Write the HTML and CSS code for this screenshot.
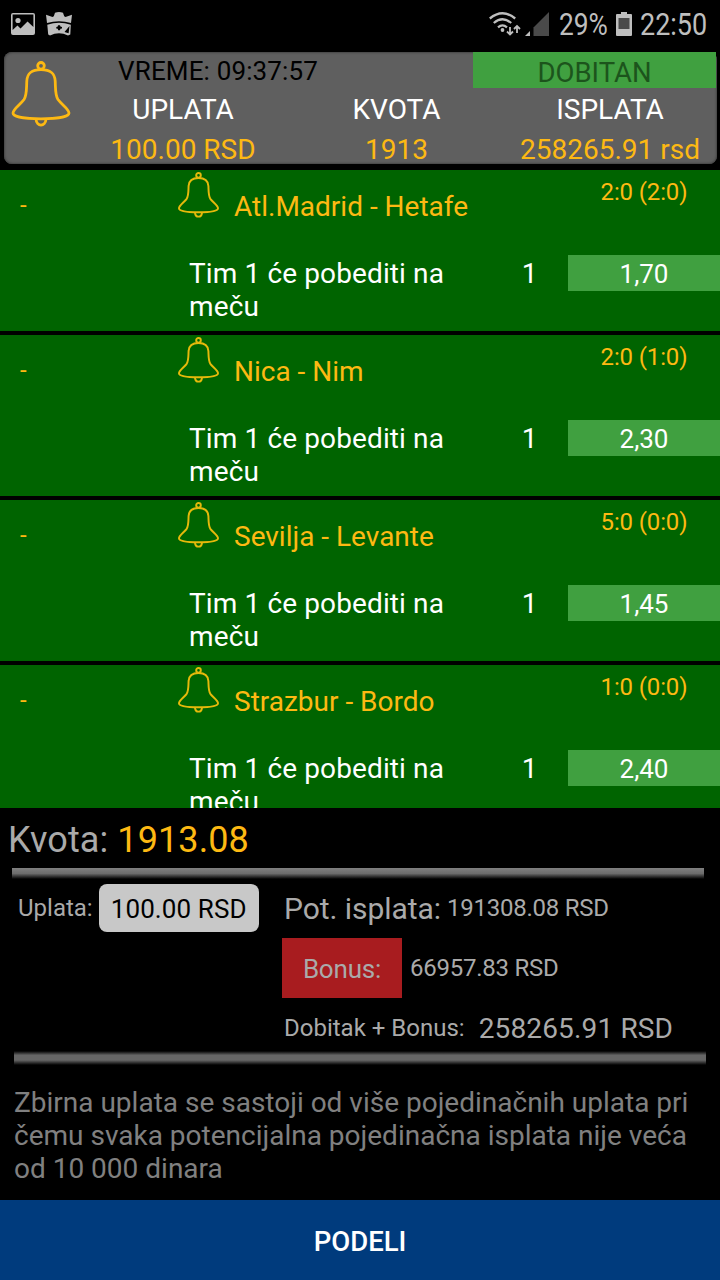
FILE: index.html
```html
<!DOCTYPE html>
<html lang="sr-Latn">
<head>
    <meta charset="UTF-8">
    <meta name="viewport" content="width=device-width, initial-scale=1.0">
    <title>Tiket</title>
    <link rel="stylesheet" href="styles.css">
</head>
<body>
    <svg class="defs">
        <symbol id="bell" viewBox="0 0 60 66">
            <circle cx="30" cy="4.8" r="3.3"/>
            <path d="M30 8.6C20 8.6 16.3 12.5 15.8 20C15.4 27 16 34 13 38.5C9.5 43.5 2 48 2 52C2 56 14 57.8 30 57.8C46 57.8 58 56 58 52C58 48 50.5 43.5 47 38.5C44 34 44.6 27 44.2 20C43.7 12.5 40 8.6 30 8.6Z"/>
            <path d="M25 58.2C25.5 66 34.5 66 35 58.2"/>
        </symbol>
    </svg>

    <div class="status-bar">
        <svg class="icon-photo" viewBox="0 0 24 22">
            <path fill-rule="evenodd" d="M2 0H22Q24 0 24 2V20Q24 22 22 22H2Q0 22 0 20V2Q0 0 2 0ZM1.6 1.6V17L6.5 12.5L9.5 15.5L16.5 8.5L22.4 14V1.6Z"/>
            <circle cx="7" cy="7.5" r="2.6"/>
        </svg>
        <svg class="icon-pirate" viewBox="0 0 26 24">
            <path d="M0 2.7L6.5 5L7.8 4.2L9 .8Q13 -.6 17 .8L18.2 4.2L19.5 5L26 2.7L25 11Q13 7.5 1 11Z"/>
            <path fill-rule="evenodd" d="M1.3 12.8Q13 8.8 24.8 12.8L24.3 22.5L22 23.5Q13 19 4 23.5L2.2 22.5ZM12 13.2L11.8 14.6L10.3 15L10.3 16.4L11.8 16.8L12.2 18.2H14L14.4 16.8L16 16.4V15L14.4 14.6L14 13.2ZM23.5 14L18.5 20L22.6 21.2Z"/>
        </svg>
        <div class="status-right">
            <svg class="icon-wifi" viewBox="0 0 32 24">
                <g fill="none" stroke="#bebebe" stroke-width="2.3">
                    <path d="M.8 6.5Q13.5 -4 26.2 6.5"/>
                    <path d="M4.8 11Q13.5 3.5 22.2 11"/>
                    <path d="M9 15.3Q13.5 11.5 18 15.3"/>
                    <path stroke-width="1.8" d="M21 15V22.5M18 19.5L21 22.5L24 19.5M28 21V14M25 17L28 14L31 17"/>
                </g>
                <circle cx="13.5" cy="18" r="1.9"/>
            </svg>
            <svg class="icon-signal" viewBox="0 0 25 24">
                <path d="M0 24L5 19V24Z"/>
                <path fill="#4a4a4a" d="M8.5 24V15.5L24 0V24Z"/>
            </svg>
            <span class="battery-text">29%</span>
            <svg class="icon-battery" viewBox="0 0 16 24">
                <path d="M5 0H11V2H15Q16 2 16 3V23Q16 24 15 24H1Q0 24 0 23V3Q0 2 1 2H5Z"/>
                <path fill="#4a4a4a" d="M2.5 6H13.5V17H2.5Z"/>
            </svg>
            <span class="clock">22:50</span>
        </div>
    </div>

    <div class="ticket">
        <svg class="bell bell-big"><use href="#bell"/></svg>
        <div class="ticket-info">
            <div class="ticket-top">
                <span class="ticket-time">VREME: 09:37:57</span>
                <span class="ticket-status">DOBITAN</span>
            </div>
            <div class="ticket-grid">
                <span>UPLATA</span>
                <span>KVOTA</span>
                <span>ISPLATA</span>
                <span class="amber">100.00 RSD</span>
                <span class="amber">1913</span>
                <span class="amber">258265.91 rsd</span>
            </div>
        </div>
    </div>

    <div class="matches">
        <div class="match">
            <div class="match-head">
                <span class="match-date">-</span>
                <svg class="bell"><use href="#bell"/></svg>
                <span class="match-name">Atl.Madrid - Hetafe</span>
                <span class="score">2:0 (2:0)</span>
            </div>
            <div class="match-bet">
                <span class="bet-text">Tim 1 će pobediti na meču</span>
                <span class="bet-tip">1</span>
                <span class="odd">1,70</span>
            </div>
        </div>
        <div class="match">
            <div class="match-head">
                <span class="match-date">-</span>
                <svg class="bell"><use href="#bell"/></svg>
                <span class="match-name">Nica - Nim</span>
                <span class="score">2:0 (1:0)</span>
            </div>
            <div class="match-bet">
                <span class="bet-text">Tim 1 će pobediti na meču</span>
                <span class="bet-tip">1</span>
                <span class="odd">2,30</span>
            </div>
        </div>
        <div class="match">
            <div class="match-head">
                <span class="match-date">-</span>
                <svg class="bell"><use href="#bell"/></svg>
                <span class="match-name">Sevilja - Levante</span>
                <span class="score">5:0 (0:0)</span>
            </div>
            <div class="match-bet">
                <span class="bet-text">Tim 1 će pobediti na meču</span>
                <span class="bet-tip">1</span>
                <span class="odd">1,45</span>
            </div>
        </div>
        <div class="match">
            <div class="match-head">
                <span class="match-date">-</span>
                <svg class="bell"><use href="#bell"/></svg>
                <span class="match-name">Strazbur - Bordo</span>
                <span class="score">1:0 (0:0)</span>
            </div>
            <div class="match-bet">
                <span class="bet-text">Tim 1 će pobediti na meču</span>
                <span class="bet-tip">1</span>
                <span class="odd">2,40</span>
            </div>
        </div>
    </div>

    <div class="total-odds">Kvota: <span class="amber">1913.08</span></div>
    <div class="line line-top"></div>

    <div class="summary">
        <div class="stake">
            <span>Uplata:</span>
            <span class="stake-value">100.00 RSD</span>
        </div>
        <div class="payouts">
            <div class="payout-row">
                <span class="payout-label">Pot. isplata:</span>
                <span class="payout-value">191308.08 RSD</span>
            </div>
            <div class="payout-row">
                <span class="bonus">Bonus:</span>
                <span class="payout-value">66957.83 RSD</span>
            </div>
            <div class="payout-row">
                <span class="sum-label">Dobitak + Bonus:</span>
                <span class="sum-value">258265.91 RSD</span>
            </div>
        </div>
    </div>
    <div class="line line-bottom"></div>

    <p class="note">Zbirna uplata se sastoji od više pojedinačnih uplata pri čemu svaka potencijalna pojedinačna isplata nije veća od 10 000 dinara</p>

    <button class="share">PODELI</button>
</body>
</html>
```
FILE: styles.css
```css
* {
    box-sizing: border-box;
}
body {
    margin: 0;
    width: 720px;
    height: 1280px;
    overflow: hidden;
    display: flex;
    flex-direction: column;
    background-color: #000;
    color: #fff;
    font-family: Roboto, sans-serif;
    font-size: 28px;
    line-height: 33px;
}
svg {
    display: block;
    flex: none;
}
.defs {
    display: none;
}
.amber {
    color: #fdb913;
}
.bell {
    width: 44px;
    height: 46px;
    fill: none;
    stroke: #e5b90b;
    stroke-width: 2.8;
}

/* status bar */
.status-bar {
    height: 52px;
    flex: none;
    display: flex;
    align-items: center;
    padding: 0 14px 4px 11px;
    color: #bebebe;
    fill: #bebebe;
}
.icon-photo { width: 24px; height: 22px; }
.icon-pirate { width: 26px; height: 24px; margin-left: 11px; }
.status-right {
    display: flex;
    align-items: center;
    margin-left: auto;
    font-size: 31px;
}
.icon-wifi { width: 32px; height: 24px; }
.icon-signal { width: 25px; height: 24px; margin-left: 4px; }
.battery-text {
    width: 48px;
    margin-left: 9px;
    padding-top: 1px;
    transform: scaleX(0.85);
    transform-origin: left;
}
.icon-battery { width: 16px; height: 24px; margin-left: 9px; }
.clock {
    width: 66px;
    margin-left: 8px;
    padding-top: 1px;
    transform: scaleX(0.87);
    transform-origin: left;
}

/* ticket header */
.ticket {
    height: 112px;
    flex: none;
    margin: 0 3px 6px 4px;
    display: flex;
    background-color: #5f5f5f;
    border-radius: 8px;
    box-shadow: inset 0 0 2px 1px #444;
}
.bell-big {
    width: 60px;
    height: 66px;
    margin: 9px 5px 0 7px;
    stroke: #fdb913;
}
.ticket-info {
    flex: 1;
}
.ticket-top {
    display: flex;
    justify-content: space-between;
    height: 36px;
    line-height: 41px;
}
.ticket-time {
    margin-left: 42px;
    color: #000;
    font-size: 26px;
    letter-spacing: 0.15px;
    line-height: 39px;
}
.ticket-status {
    width: 243px;
    margin-right: 1px;
    background-color: #40a040;
    color: #1c541c;
    text-align: center;
    font-size: 27.5px;
}
.ticket-grid {
    display: grid;
    grid-template-columns: 214px 213px 214px;
    grid-auto-rows: 40px;
    line-height: 43px;
    text-align: center;
}

/* matches */
.matches {
    height: 638px;
    flex: none;
    overflow: hidden;
}
.match {
    height: 161px;
    margin-bottom: 4px;
    background-color: #006400;
}
.match-head {
    display: flex;
    height: 85px;
    color: #fdb913;
}
.match-date {
    width: 176px;
    padding: 19px 0 0 20px;
    font-size: 24px;
}
.match-head .bell {
    width: 45px;
    margin-top: 2px;
}
.match-name {
    flex: 1;
    padding: 20px 0 0 13px;
}
.score {
    width: 152px;
    padding-top: 6px;
    text-align: center;
    font-size: 24px;
    letter-spacing: -0.15px;
}
.match-bet {
    display: flex;
    padding-left: 189px;
}
.bet-text {
    width: 302px;
    padding: 2px 40px 0 0;
    letter-spacing: 0.12px;
}
.bet-tip {
    width: 77px;
    padding-top: 2px;
    text-align: center;
}
.odd {
    width: 152px;
    height: 36px;
    line-height: 38px;
    background-color: #40a040;
    text-align: center;
    font-size: 26px;
}

/* totals */
.total-odds {
    height: 60px;
    flex: none;
    padding-left: 8px;
    color: #aaa;
    font-size: 36px;
    letter-spacing: 0.1px;
    line-height: 65px;
}
.line {
    width: 692px;
    flex: none;
}
.line-top {
    height: 11px;
    margin-left: 12px;
    background: linear-gradient(#808080, #6c6c6c 50%, #000);
}
.line-bottom {
    height: 14px;
    margin-left: 14px;
    background: linear-gradient(#000, #666 30%, #666 65%, #000);
}
.summary {
    height: 172px;
    flex: none;
    display: flex;
    color: #aaa;
    font-size: 24px;
}
.stake {
    width: 282px;
    height: 48px;
    display: flex;
    align-items: center;
    margin-top: 5px;
    padding-left: 18px;
    line-height: 50px;
}
.stake-value {
    width: 160px;
    height: 48px;
    margin-left: 6px;
    border-radius: 8px;
    background-color: #c8c8c8;
    color: #000;
    text-align: center;
    font-size: 26px;
    letter-spacing: 0.1px;
}
.payouts {
    margin-top: -1px;
}
.payout-row {
    display: flex;
    align-items: center;
    height: 60px;
}
.payout-label {
    margin: 0 6px 0 2px;
    font-size: 30px;
    letter-spacing: -0.05px;
}
.payout-value {
    padding-top: 1px;
    letter-spacing: -0.25px;
}
.bonus {
    width: 120px;
    margin-right: 8px;
    background-color: #a81c1f;
    text-align: center;
    font-size: 26px;
    letter-spacing: -0.2px;
    line-height: 62px;
    height: 60px;
}
.sum-label {
    margin: 0 14px 0 2px;
    padding-top: 1px;
}
.sum-value {
    padding-top: 1px;
    font-size: 28px;
    letter-spacing: 0.15px;
}
.note {
    flex: 1;
    margin: 0;
    padding: 21px 14px 0;
    color: #808080;
}
.share {
    height: 80px;
    flex: none;
    border: none;
    padding: 3px 0 0;
    background-color: #003b7d;
    color: #fff;
    font-family: inherit;
    font-size: 27.5px;
    font-weight: 500;
}
```
